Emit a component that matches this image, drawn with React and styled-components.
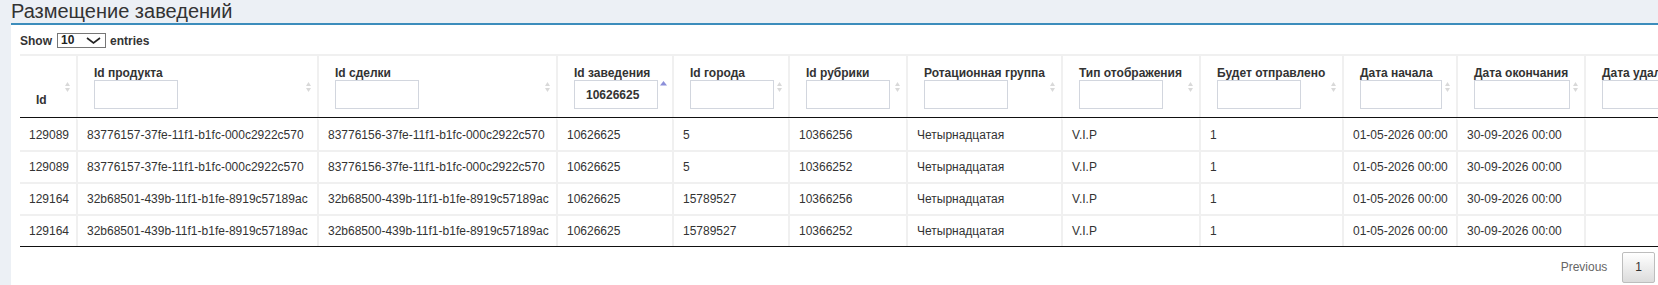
import React from 'react';
import styled, { createGlobalStyle } from 'styled-components';

const GlobalStyle = createGlobalStyle`
  *, *::before, *::after { box-sizing: border-box; }
  html, body { margin: 0; padding: 0; }
  body {
    width: 1658px;
    height: 285px;
    overflow: hidden;
    background: #ecf0f5;
    font-family: "Liberation Sans", Arial, Helvetica, sans-serif;
    font-size: 12px;
    color: #333;
  }
`;

const columns = [
  { key: 'id', label: 'Id', width: 56, sort: 'both' },
  { key: 'product', label: 'Id продукта', width: 241, input: 84, sort: 'both' },
  { key: 'deal', label: 'Id сделки', width: 239, input: 84, sort: 'both' },
  { key: 'place', label: 'Id заведения', width: 116, input: 84, sort: 'asc', value: '10626625' },
  { key: 'city', label: 'Id города', width: 116, input: 84, sort: 'both' },
  { key: 'rubric', label: 'Id рубрики', width: 118, input: 84, sort: 'both' },
  { key: 'rotation', label: 'Ротационная группа', width: 155, input: 84, sort: 'both' },
  { key: 'display', label: 'Тип отображения', width: 138, input: 84, sort: 'both' },
  { key: 'sent', label: 'Будет отправлено', width: 143, input: 84, sort: 'both' },
  { key: 'start', label: 'Дата начала', width: 114, input: 82, sort: 'both' },
  { key: 'end', label: 'Дата окончания', width: 128, input: 96, sort: 'both' },
  { key: 'deleted', label: 'Дата удаления', width: 130, input: 96, sort: 'both' },
];

const gridTemplate = columns.map((c) => `${c.width}px`).join(' ');

const rows = [
  ['129089', '83776157-37fe-11f1-b1fc-000c2922c570', '83776156-37fe-11f1-b1fc-000c2922c570', '10626625', '5', '10366256', 'Четырнадцатая', 'V.I.P', '1', '01-05-2026 00:00', '30-09-2026 00:00', ''],
  ['129089', '83776157-37fe-11f1-b1fc-000c2922c570', '83776156-37fe-11f1-b1fc-000c2922c570', '10626625', '5', '10366252', 'Четырнадцатая', 'V.I.P', '1', '01-05-2026 00:00', '30-09-2026 00:00', ''],
  ['129164', '32b68501-439b-11f1-b1fe-8919c57189ac', '32b68500-439b-11f1-b1fe-8919c57189ac', '10626625', '15789527', '10366256', 'Четырнадцатая', 'V.I.P', '1', '01-05-2026 00:00', '30-09-2026 00:00', ''],
  ['129164', '32b68501-439b-11f1-b1fe-8919c57189ac', '32b68500-439b-11f1-b1fe-8919c57189ac', '10626625', '15789527', '10366252', 'Четырнадцатая', 'V.I.P', '1', '01-05-2026 00:00', '30-09-2026 00:00', ''],
];

const Page = styled.div`
  display: flex;
  flex-direction: column;
  height: 285px;
  padding-left: 11px;
`;

const Title = styled.h1`
  margin: 0;
  font-size: 20px;
  font-weight: 400;
  line-height: 23px;
  color: #333;
`;

const Panel = styled.section`
  flex: 1;
  min-width: 0;
  display: flex;
  flex-direction: column;
  background: #fff;
  border-top: 2px solid #3c8dbc;
  padding: 8px 0 0 9px;
`;

const LengthRow = styled.label`
  display: flex;
  align-items: center;
  height: 15px;
  font-weight: 700;
  white-space: pre;
`;

const SelectBox = styled.span`
  display: flex;
  align-items: center;
  width: 49px;
  height: 15px;
  margin: 0 4px 0 5px;
  padding: 0 4px 0 3px;
  border: 1px solid #767676;
  background: #fff;
`;

const Select = styled.select`
  appearance: none;
  -webkit-appearance: none;
  flex: 1;
  min-width: 0;
  height: 13px;
  border: 0;
  padding: 0;
  margin: 0;
  background: transparent;
  font: inherit;
  line-height: 13px;
  color: #222;
  outline: none;
`;

const TableScroll = styled.div`
  margin-top: 6px;
  overflow: hidden;
  width: 100%;
`;

const HeadRow = styled.div`
  display: grid;
  grid-template-columns: ${gridTemplate};
  width: max-content;
  border-bottom: 1px solid #111;
`;

const HeadCell = styled.div`
  position: relative;
  display: flex;
  flex-direction: column;
  justify-content: ${(p) => (p.$bottom ? 'flex-end' : 'flex-start')};
  height: 63px;
  padding: 10px 18px ${(p) => (p.$bottom ? '10px' : '8px')} 16px;
  border-top: 2px solid #f0f0f0;
  border-left: ${(p) => (p.$first ? '0' : '2px solid #f0f0f0')};
  font-weight: 700;
  white-space: nowrap;
`;

const HeadLabel = styled.span`
  line-height: 14px;
`;

const FilterInput = styled.input`
  width: ${(p) => p.$w}px;
  height: 29px;
  margin: 0;
  padding: 0 11px;
  border: 1px solid #d2d6de;
  border-radius: 0;
  background: #fff;
  font: inherit;
  color: #333;
  outline: none;
`;

const SortMark = styled.svg`
  position: absolute;
  right: 5px;
  top: 50%;
  transform: translateY(-50%);
`;

const BodyTable = styled.div`
  width: max-content;
  border-bottom: 1px solid #111;
`;

const BodyRow = styled.div`
  display: grid;
  grid-template-columns: ${gridTemplate};
`;

const BodyCell = styled.div`
  display: flex;
  align-items: center;
  height: 32px;
  padding: 0 9px;
  border-top: 2px solid ${(p) => (p.$firstRow ? 'transparent' : '#f0f0f0')};
  border-left: ${(p) => (p.$first ? '0' : '2px solid #f0f0f0')};
  white-space: nowrap;
  overflow: hidden;
  color: #333;
`;

const Pager = styled.nav`
  display: flex;
  justify-content: flex-end;
  padding: 5px 3px 0 0;
`;

const PageButton = styled.span`
  display: inline-block;
  min-width: 18px;
  margin-left: 2px;
  padding: 6px 12px;
  line-height: 17px;
  text-align: center;
  border: 1px solid ${(p) => (p.$current ? '#bdbdbd' : 'transparent')};
  border-radius: 2px;
  background: ${(p) => (p.$current ? 'linear-gradient(to bottom, #fff 0%, #dcdcdc 100%)' : 'transparent')};
  color: ${(p) => (p.$disabled ? '#666' : '#333')};
`;

function SortIcon({ dir }) {
  if (dir === 'asc') {
    return (
      <SortMark width="7" height="11" viewBox="0 0 7 11" style={{ marginTop: '-1px' }}>
        <polygon points="3.5,0.5 7,5 0,5" fill="#8c8fd9" />
      </SortMark>
    );
  }
  return (
    <SortMark width="7" height="11" viewBox="0 0 7 11">
      <polygon points="3.5,0.5 6,4.5 1,4.5" fill="#d9d9d9" />
      <polygon points="1,6.5 6,6.5 3.5,10.5" fill="#d9d9d9" />
    </SortMark>
  );
}

function Chevron() {
  return (
    <svg width="15" height="7" viewBox="0 0 15 7">
      <polyline points="1,1 7.5,6 14,1" fill="none" stroke="#222" strokeWidth="1.6" />
    </svg>
  );
}

export default function App() {
  return (
    <>
      <GlobalStyle />
      <Page>
        <Title>Размещение заведений</Title>
        <Panel>
          <LengthRow>
            Show
            <SelectBox>
              <Select defaultValue="10">
                <option value="10">10</option>
                <option value="25">25</option>
                <option value="50">50</option>
                <option value="100">100</option>
              </Select>
              <Chevron />
            </SelectBox>
            entries
          </LengthRow>
          <TableScroll>
            <HeadRow>
              {columns.map((c, i) => (
                <HeadCell key={c.key} $first={i === 0} $bottom={!c.input}>
                  <HeadLabel>{c.label}</HeadLabel>
                  {c.input && <FilterInput type="text" $w={c.input} defaultValue={c.value || ''} />}
                  <SortIcon dir={c.sort} />
                </HeadCell>
              ))}
            </HeadRow>
            <BodyTable>
              {rows.map((r, ri) => (
                <BodyRow key={ri}>
                  {r.map((v, ci) => (
                    <BodyCell key={ci} $first={ci === 0} $firstRow={ri === 0}>
                      {v}
                    </BodyCell>
                  ))}
                </BodyRow>
              ))}
            </BodyTable>
          </TableScroll>
          <Pager>
            <PageButton $disabled>Previous</PageButton>
            <PageButton $current>1</PageButton>
          </Pager>
        </Panel>
      </Page>
    </>
  );
}
